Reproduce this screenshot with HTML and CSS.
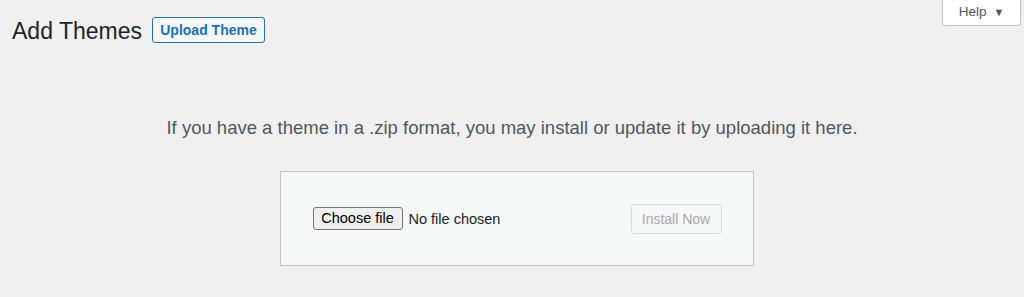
FILE: index.html
```html
<!DOCTYPE html>
<html>
<head>
<meta charset="utf-8">
<link rel="stylesheet" href="styles.css">
</head>
<body>
<div class="help-wrap">
  <button class="help-tab">Help <span class="arrow">▼</span></button>
</div>
<div class="wrap">
  <div class="header">
    <h1 class="title">Add Themes</h1>
    <button class="upload-btn">Upload Theme</button>
  </div>
  <div class="upload">
    <p class="install-help">If you have a theme in a .zip format, you may install or update it by uploading it here.</p>
    <div class="form-row">
      <form class="upload-form">
        <div class="file-input">
          <span class="choose">Choose file</span>
          <span class="nofile">No file chosen</span>
        </div>
        <button class="install-btn" disabled>Install Now</button>
      </form>
    </div>
  </div>
</div>
</body>
</html>
```
FILE: styles.css
```css
html, body {
  margin: 0;
  padding: 0;
  background: #f0f0f1;
  font-family: "Liberation Sans", Arial, sans-serif;
  color: #3c434a;
}
.help-wrap {
  position: absolute;
  top: 0;
  right: 3px;
}
.help-tab {
  width: 79px;
  height: 26px;
  background: #fff;
  border: 1px solid #c3c4c7;
  border-top: none;
  border-radius: 0 0 4px 4px;
  color: #50575e;
  font-family: "Liberation Sans", Arial, sans-serif;
  font-size: 13.5px;
  padding: 0 0 2px 0;
  display: flex;
  align-items: center;
  justify-content: center;
  gap: 7px;
}
.arrow {
  font-size: 11px;
}
.wrap {
  padding: 0 0 0 12px;
}
.header {
  display: flex;
  align-items: center;
  gap: 10px;
  padding-top: 17px;
  height: 26px;
}
.title {
  margin: 0;
  font-size: 23px;
  font-weight: 400;
  color: #1d2327;
  line-height: 26px;
  position: relative;
  top: 1px;
}
.upload-btn {
  box-sizing: border-box;
  width: 113px;
  height: 26px;
  padding: 0;
  background: #f6f7f7;
  border: 1px solid #2271b1;
  border-radius: 3px;
  color: #2271b1;
  font-family: "Liberation Sans", Arial, sans-serif;
  font-size: 14px;
  font-weight: 700;
}
.upload {
  margin-left: -12px;
  text-align: center;
}
.install-help {
  margin: 0;
  padding-top: 73px;
  font-size: 18.5px;
  line-height: 24px;
  color: #50575e;
}
.form-row {
  display: flex;
  justify-content: center;
  padding-top: 31px;
}
.upload-form {
  margin: 0 0 0 9px;
  box-sizing: border-box;
  width: 474px;
  height: 95px;
  background: #f6f7f7;
  border: 1px solid #c3c4c7;
  padding: 0 31px 0 32px;
  display: flex;
  align-items: center;
  justify-content: space-between;
}
.file-input {
  display: flex;
  align-items: center;
  gap: 6px;
  font-size: 14.5px;
}
.choose {
  box-sizing: border-box;
  width: 90px;
  height: 23px;
  line-height: 21px;
  border: 1px solid #767676;
  border-radius: 3px;
  background: #efefef;
  color: #000;
  text-align: center;
}
.nofile {
  color: #1d2327;
}
.install-btn {
  box-sizing: border-box;
  width: 91px;
  height: 30px;
  background: #f6f7f7;
  border: 1px solid #dcdcde;
  border-radius: 3px;
  color: #a7aaad;
  font-family: "Liberation Sans", Arial, sans-serif;
  font-size: 14px;
  padding: 0;
}
```
